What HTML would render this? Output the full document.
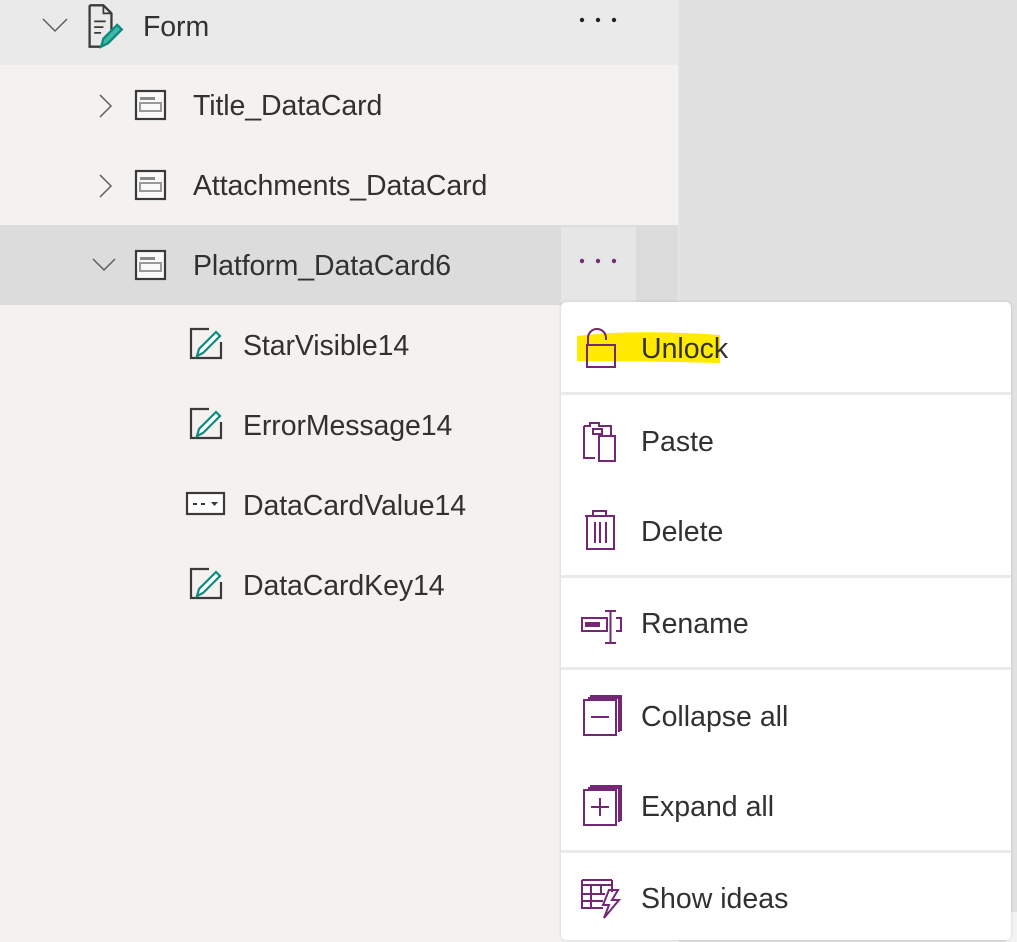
<!DOCTYPE html>
<html><head><style>
body{margin:0;width:1017px;height:942px;overflow:hidden;background:#e1e1e1;font-family:"Liberation Sans",sans-serif;color:#323130;position:relative}
.left{position:absolute;left:0;top:0;width:678px;height:942px;background:#f3f2f1;border-right:1px solid #e8e8e8}
.row{position:absolute;left:0;width:678px;height:80px}
.t{position:absolute;font-size:28.5px;line-height:32px;white-space:nowrap;letter-spacing:-0.1px}
svg{position:absolute}
.menu{position:absolute;left:561px;top:302px;width:450px;height:638px;background:#fff;border-radius:5px;box-shadow:0 0 3px rgba(0,0,0,.15)}
.sep{position:absolute;left:0;width:450px;height:3px;background:#ebeaea}
.mt{position:absolute;left:80px;font-size:28.5px;line-height:32px;color:#323130}
.p{stroke:#742774;fill:none;stroke-width:2}
</style></head><body>
<div class="left">
 <div class="row" style="top:0;height:65px;background:#eaeaea"></div>
 <div class="row" style="top:225px;background:#dcdcdc"></div>
 <div style="position:absolute;left:561px;top:227px;width:75px;height:76px;background:#e6e6e6"></div>
</div>
<!-- Form row -->
<svg style="left:40px;top:14px" width="30" height="22"><path d="M3 5 L15 17 L27 5" stroke="#605e5c" stroke-width="1.5" fill="none"/></svg>
<svg style="left:86px;top:3px" width="44" height="46" viewBox="0 0 38 40"><path d="M3 2 H15 L22 9 V30 M3 2 V38 H12" stroke="#3b3a39" stroke-width="2" fill="none"/><path d="M15 2 V9 H22" stroke="#3b3a39" stroke-width="1.5" fill="none"/><path d="M7 16 H17 M7 21 H15 M7 26 H13" stroke="#3b3a39" stroke-width="1.5"/><path d="M13 38 L15 31 L27 19 L31 23 L19 35 Z" stroke="#0b8a7e" stroke-width="2" fill="#3fb8a8"/></svg>
<div class="t" style="left:143px;top:11px">Form</div>
<svg style="left:578px;top:14px" width="40" height="10"><circle cx="4" cy="6" r="2.2" fill="#222"/><circle cx="20" cy="6" r="2.2" fill="#222"/><circle cx="36" cy="6" r="2.2" fill="#222"/></svg>
<!-- data cards -->
<svg style="left:96px;top:92px" width="20" height="30"><path d="M4 3 L15 14 L4 25" stroke="#605e5c" stroke-width="1.5" fill="none"/></svg>
<svg style="left:96px;top:172px" width="20" height="30"><path d="M4 3 L15 14 L4 25" stroke="#605e5c" stroke-width="1.5" fill="none"/></svg>
<svg style="left:90px;top:255px" width="30" height="22"><path d="M3 4 L14 15 L25 4" stroke="#605e5c" stroke-width="1.5" fill="none"/></svg>
<svg style="left:134px;top:89px" width="34" height="34"><rect x="2" y="2" width="29" height="28" stroke="#3b3a39" stroke-width="2.2" fill="#fafafa"/><rect x="6" y="8" width="15" height="3" fill="#888"/><rect x="6" y="14" width="21" height="8" stroke="#999" stroke-width="2" fill="none"/></svg>
<svg style="left:134px;top:169px" width="34" height="34"><rect x="2" y="2" width="29" height="28" stroke="#3b3a39" stroke-width="2.2" fill="#fafafa"/><rect x="6" y="8" width="15" height="3" fill="#888"/><rect x="6" y="14" width="21" height="8" stroke="#999" stroke-width="2" fill="none"/></svg>
<svg style="left:134px;top:249px" width="34" height="34"><rect x="2" y="2" width="29" height="28" stroke="#3b3a39" stroke-width="2.2" fill="#fafafa"/><rect x="6" y="8" width="15" height="3" fill="#888"/><rect x="6" y="14" width="21" height="8" stroke="#999" stroke-width="2" fill="none"/></svg>
<div class="t" style="left:193px;top:90px">Title_DataCard</div>
<div class="t" style="left:193px;top:170px">Attachments_DataCard</div>
<div class="t" style="left:193px;top:250px">Platform_DataCard6</div>
<svg style="left:578px;top:255px" width="40" height="10"><circle cx="4" cy="6" r="2.2" fill="#742774"/><circle cx="20" cy="6" r="2.2" fill="#742774"/><circle cx="36" cy="6" r="2.2" fill="#742774"/></svg>
<!-- children -->
<svg style="left:189px;top:326px" width="36" height="36"><path d="M20 3 H2 V32 H32 V16" stroke="#3b3a39" stroke-width="2.2" fill="none"/><path d="M8 30 L10 23 L27 6 L31 10 L14 27 Z" stroke="#0b8a7e" stroke-width="2.2" fill="#fff"/></svg>
<svg style="left:189px;top:406px" width="36" height="36"><path d="M20 3 H2 V32 H32 V16" stroke="#3b3a39" stroke-width="2.2" fill="none"/><path d="M8 30 L10 23 L27 6 L31 10 L14 27 Z" stroke="#0b8a7e" stroke-width="2.2" fill="#fff"/></svg>
<svg style="left:185px;top:490px" width="42" height="30"><rect x="2" y="3" width="37" height="21" stroke="#3b3a39" stroke-width="2.2" fill="#fff"/><path d="M8 14 H12 M16 14 H20" stroke="#3b3a39" stroke-width="2"/><path d="M26 12 H33 L29.5 16 Z" fill="#3b3a39"/></svg>
<svg style="left:189px;top:566px" width="36" height="36"><path d="M20 3 H2 V32 H32 V16" stroke="#3b3a39" stroke-width="2.2" fill="none"/><path d="M8 30 L10 23 L27 6 L31 10 L14 27 Z" stroke="#0b8a7e" stroke-width="2.2" fill="#fff"/></svg>
<div class="t" style="left:243px;top:330px">StarVisible14</div>
<div class="t" style="left:243px;top:410px">ErrorMessage14</div>
<div class="t" style="left:243px;top:490px">DataCardValue14</div>
<div class="t" style="left:243px;top:570px">DataCardKey14</div>
<div style="position:absolute;left:1006px;top:912px;width:11px;height:30px;background:#f3f3f3"></div>
<!-- menu -->
<div class="menu">
 <svg style="left:14px;top:25px" width="150" height="44"><path d="M2 9 Q60 2 145 8 L145 36 Q60 34 2 34 Z" fill="#ffea00"/></svg>
 <svg style="left:22px;top:24px" width="36" height="44"><path class="p" d="M5 18 V12 A9 9 0 0 1 23 12 V14"/><rect class="p" x="4" y="19" width="28" height="22" fill="none"/></svg>
 <div class="mt" style="top:31px">Unlock</div>
 <div class="sep" style="top:90px"></div>
 <svg style="left:20px;top:118px" width="40" height="44"><path class="p" d="M3 6 V38 H14 M3 6 H9 V3 H18 V6 H24 M30 16 V6 H24"/><rect class="p" x="12" y="9" width="9" height="5"/><rect class="p" x="18" y="16" width="16" height="25"/></svg>
 <div class="mt" style="top:124px">Paste</div>
 <svg style="left:20px;top:208px" width="40" height="44"><path class="p" d="M4 6 H34 M12 6 V1 H25 V6 M6 6 V39 H33 V6 M14 12 V33 M19 12 V33 M25 12 V33"/></svg>
 <div class="mt" style="top:214px">Delete</div>
 <div class="sep" style="top:273px"></div>
 <svg style="left:18px;top:305px" width="46" height="40"><rect class="p" x="3" y="11" width="25" height="13"/><rect x="6" y="15" width="15" height="5" fill="#742774"/><path class="p" d="M26 4 H37 M26 36 H37 M31.5 4 V36 M37 11 H42 V24 H37"/></svg>
 <div class="mt" style="top:306px">Rename</div>
 <div class="sep" style="top:365px"></div>
 <svg style="left:20px;top:393px" width="44" height="44"><path class="p" d="M7 3 H38 V37 M9 1 H40 V36" stroke-width="1.5"/><rect class="p" x="3" y="5" width="32" height="35"/><path class="p" d="M10 22 H28"/></svg>
 <div class="mt" style="top:399px">Collapse all</div>
 <svg style="left:20px;top:483px" width="44" height="44"><path class="p" d="M7 3 H38 V37 M9 1 H40 V36" stroke-width="1.5"/><rect class="p" x="3" y="5" width="32" height="35"/><path class="p" d="M10 22 H28 M19 13 V31"/></svg>
 <div class="mt" style="top:489px">Expand all</div>
 <div class="sep" style="top:548px"></div>
 <svg style="left:18px;top:576px" width="46" height="42"><path class="p" d="M3 2 H33 M3 7 H33 M3 2 V30 H24 M3 16 H26 M3 23 H24 M12 7 V30 M22 7 V16 M33 2 V14"/><path d="M30 12 H39 L33 22 H40 L25 40 L30 27 H24 Z" stroke="#742774" stroke-width="2" fill="none"/></svg>
 <div class="mt" style="top:581px">Show ideas</div>
</div>
</body></html>
